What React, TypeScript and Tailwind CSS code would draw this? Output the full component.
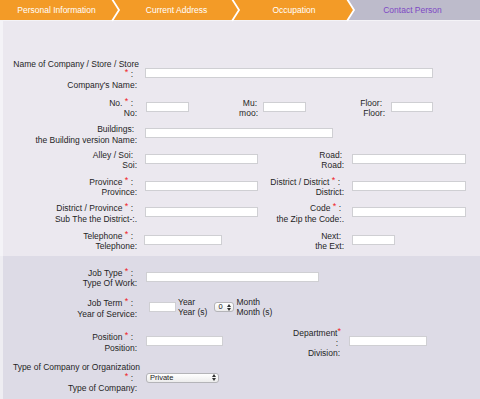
import React from 'react';

const font = "font-['Liberation_Sans',Arial,sans-serif]";

const Star: React.FC = () => (
  <span className="text-[#f0201e] text-[9px] leading-[0] align-[2px]">*</span>
);

type Line = { text: React.ReactNode; className?: string };

const Label: React.FC<{ lines: Line[]; className?: string; leading?: string }> = ({
  lines,
  className = 'w-[134px]',
  leading = 'leading-[10.5px]',
}) => (
  <div className={`shrink-0 text-right text-[#1f1f1f] ${leading} ${className}`}>
    {lines.map((line, i) => (
      <div key={i} className={`whitespace-nowrap ${line.className ?? ''}`}>
        {line.text}
      </div>
    ))}
  </div>
);

const Field: React.FC<{ className: string }> = ({ className }) => (
  <input
    type="text"
    readOnly
    className={`block h-[10px] mb-[3px] shrink-0 bg-white border border-[#cfcfd3] ${className}`}
  />
);

const Arrows: React.FC = () => (
  <svg width="4" height="7" viewBox="0 0 4 7" className="shrink-0">
    <polygon points="0,3 2,0 4,3" fill="#333" />
    <polygon points="0,4 4,4 2,7" fill="#333" />
  </svg>
);

const Select: React.FC<{ value: string; className: string }> = ({ value, className }) => (
  <div
    className={`flex items-center justify-between h-[10px] shrink-0 rounded-[3px] border border-[#b4b4b8] bg-gradient-to-b from-white to-[#ececec] pl-[3px] pr-[2px] text-[7.5px] leading-none text-[#222] ${className}`}
  >
    <span>{value}</span>
    <Arrows />
  </div>
);

const first = 'pr-[3px]';
const req = 'pr-[4px]';

const Chevron: React.FC<{ from: string; to: string }> = ({ from, to }) => (
  <svg width="10" height="20" viewBox="0 0 10 20" className="absolute top-0 right-0 z-10 overflow-visible">
    <polygon points="0,0 2,0 9,10 2,20 0,20" fill={from} />
    <polygon points="2,0 10,0 10,20 2,20 9,10" fill={to} />
    <polyline points="2,-1 9,10 2,21" fill="none" stroke="#ffffff" strokeWidth="1.8" />
  </svg>
);

const App: React.FC = () => {
  const orange = '#f39b27';
  const gray = '#bdbbcb';

  return (
    <div className={`w-[480px] h-[399px] overflow-hidden flex flex-col bg-[#ebe8ef] text-[8.5px] ${font}`}>
      {/* Steps */}
      <div className="flex h-[21px] shrink-0 border-b border-[#f4f3f7] text-[8.5px] leading-[21px]">
        <div className="relative w-[120px] bg-[#f39b27] text-white text-center pr-[7px]">
          Personal Information
          <Chevron from={orange} to={orange} />
        </div>
        <div className="relative w-[120px] bg-[#f39b27] text-white text-center pr-[7px]">
          Current Address
          <Chevron from={orange} to={orange} />
        </div>
        <div className="relative w-[115px] bg-[#f39b27] text-white text-center pr-[7px]">
          Occupation
          <Chevron from={orange} to={gray} />
        </div>
        <div className="flex-1 bg-[#bdbbcb] text-[#7d48c4] text-center pr-[10px]">Contact Person</div>
      </div>

      {/* Address section */}
      <div className="flex flex-col border-l-[3px] border-[#f4f3f7] pt-[37.75px] pb-[4.5px]">
        <div className="flex items-center">
          <Label
            lines={[
              { text: 'Name of Company / Store / Store', className: '-mr-[2px]' },
              { text: <><Star /> :</>, className: req },
              { text: "Company's Name:" },
            ]}
          />
          <Field className="ml-[8px] w-[288px]" />
        </div>

        <div className="flex items-center mt-[7.5px]">
          <Label lines={[{ text: <>No. <Star /> :</>, className: req }, { text: 'No:' }]} />
          <Field className="ml-[9px] w-[43px]" />
          <Label className="w-[69px]" lines={[{ text: 'Mu:', className: 'pr-[1px]' }, { text: 'moo:' }]} />
          <Field className="ml-[5px] w-[43px]" />
          <Label className="w-[79px]" lines={[{ text: 'Floor:', className: first }, { text: 'Floor:' }]} />
          <Field className="ml-[6px] w-[42px]" />
        </div>

        <div className="flex items-center mt-[5.25px]">
          <Label lines={[{ text: 'Buildings:', className: first }, { text: 'the Building version Name:' }]} />
          <Field className="ml-[8px] w-[188px]" />
        </div>

        <div className="flex items-center mt-[4.75px]">
          <Label lines={[{ text: 'Alley / Soi:', className: req }, { text: 'Soi:' }]} />
          <Field className="ml-[8px] w-[113px]" />
          <Label className="w-[86px]" lines={[{ text: 'Road:', className: 'pr-[2px]' }, { text: 'Road:' }]} />
          <Field className="ml-[8px] w-[114px]" />
        </div>

        <div className="flex items-center mt-[5.75px]">
          <Label lines={[{ text: <>Province <Star /> :</>, className: req }, { text: 'Province:' }]} />
          <Field className="ml-[8px] w-[113px]" />
          <Label
            className="w-[86px]"
            lines={[{ text: <>District / District <Star /> :</>, className: req }, { text: 'District:' }]}
          />
          <Field className="ml-[8px] w-[114px]" />
        </div>

        <div className="flex items-center mt-[5.5px]">
          <Label
            lines={[
              { text: <>District / Province <Star /> :</>, className: req },
              { text: 'Sub The the District-:.' },
            ]}
          />
          <Field className="ml-[8px] w-[113px]" />
          <Label
            className="w-[86px]"
            lines={[{ text: <>Code <Star /> :</>, className: first }, { text: 'the Zip the Code:.' }]}
          />
          <Field className="ml-[8px] w-[114px]" />
        </div>

        <div className="flex items-center mt-[6.5px]">
          <Label lines={[{ text: <>Telephone <Star /> :</>, className: req }, { text: 'Telephone:' }]} />
          <Field className="ml-[7px] w-[78px]" />
          <Label className="w-[122px]" lines={[{ text: 'Next:', className: first }, { text: 'the Ext:' }]} />
          <Field className="ml-[8px] w-[43px]" />
        </div>
      </div>

      {/* Occupation section */}
      <div className="flex-1 flex flex-col bg-[#dddbe6] border-l-[3px] border-[#eeedf2] pt-[11.5px]">
        <div className="flex items-center">
          <Label lines={[{ text: <>Job Type <Star /> :</>, className: req }, { text: 'Type Of Work:' }]} />
          <Field className="ml-[9px] w-[173px]" />
        </div>

        <div className="flex items-center mt-[8px]">
          <Label lines={[{ text: <>Job Term <Star /> :</>, className: req }, { text: 'Year of Service:' }]} />
          <Field className="ml-[12px] w-[27px]" />
          <div className="ml-[2px] mb-[3px] leading-[10.5px] text-[#1f1f1f]">
            <div>Year</div>
            <div>Year (s)</div>
          </div>
          <Select value="0" className="ml-[7px] mb-[3px] w-[20px]" />
          <div className="ml-[2px] mb-[3px] leading-[10.5px] text-[#1f1f1f]">
            <div>Month</div>
            <div>Month (s)</div>
          </div>
        </div>

        <div className="flex items-center mt-[7.25px]">
          <Label lines={[{ text: <>Position <Star /> :</>, className: req }, { text: 'Position:' }]} />
          <Field className="ml-[9px] w-[77px]" />
          <Label
            className="w-[118px]"
            leading="leading-[10px]"
            lines={[
              { text: <>Department<Star /></> },
              { text: ':', className: 'pr-[3px]' },
              { text: 'Division:', className: 'pr-[1px]' },
            ]}
          />
          <Field className="ml-[8px] w-[78px]" />
        </div>

        <div className="flex items-center mt-[4.25px]">
          <Label
            lines={[
              { text: 'Type of Company or Organization', className: '-mr-[3px]' },
              { text: <><Star /> :</>, className: req },
              { text: 'Type of Company:' },
            ]}
          />
          <Select value="Private" className="ml-[9px] w-[73px]" />
        </div>
      </div>
    </div>
  );
};

export default App;
